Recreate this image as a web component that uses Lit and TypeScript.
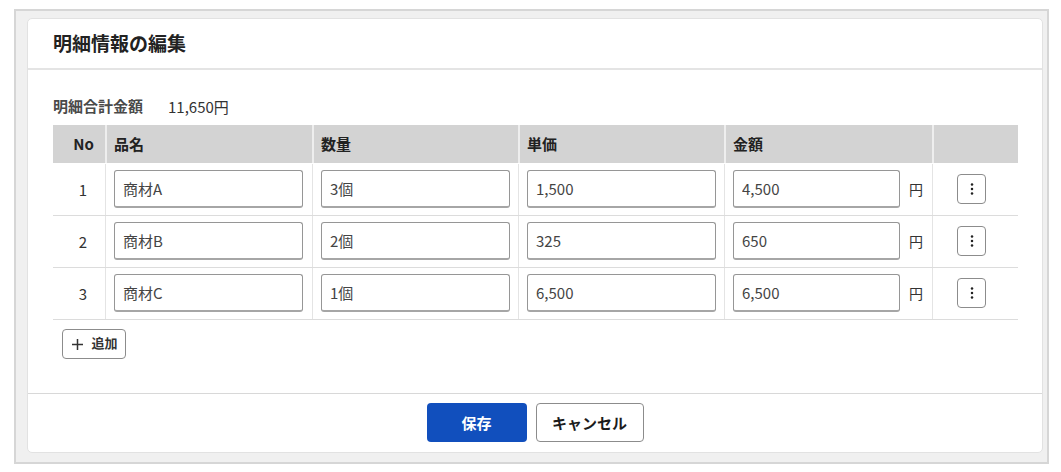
import { LitElement, html, css } from "lit";
import { customElement } from "lit/decorators.js";

const rows = [
  { no: 1, name: "商材A", qty: "3個", price: "1,500", amount: "4,500" },
  { no: 2, name: "商材B", qty: "2個", price: "325", amount: "650" },
  { no: 3, name: "商材C", qty: "1個", price: "6,500", amount: "6,500" },
];

@customElement("app-root")
export class AppRoot extends LitElement {
  static styles = css`
    :host {
      display: block;
      width: 1061px;
      height: 472px;
      box-sizing: border-box;
      padding: 9px 12px 8px 14px;
      background: #fff;
      font-family: "Noto Sans CJK JP", "Noto Sans", sans-serif;
      color: #333;
    }
    .frame {
      box-sizing: border-box;
      height: 455px;
      border: 2px solid #d6d6d6;
      background: #f0f0f0;
      padding: 7px 4px 9px 11px;
    }
    .card {
      box-sizing: border-box;
      height: 100%;
      background: #fff;
      border: 1px solid #e2e2e2;
      border-radius: 5px;
      display: flex;
      flex-direction: column;
    }
    .head {
      height: 51px;
      flex: none;
      box-sizing: border-box;
      border-bottom: 2px solid #e4e4e4;
      padding: 0 0 2px 25px;
      display: flex;
      align-items: center;
      font-size: 19px;
      font-weight: 700;
      color: #222;
    }
    .body {
      flex: 1;
      padding: 21px 24px 0 25px;
    }
    .summary {
      display: flex;
      align-items: center;
      height: 30px;
      margin-bottom: 4px;
      gap: 25px;
      font-size: 15px;
      color: #333;
    }
    .summary b {
      font-size: 15px;
      font-weight: 700;
      color: #4a4a4a;
      position: relative;
      top: -1px;
    }
    .row {
      display: grid;
      grid-template-columns: 52px 207px 206px 206px 208px 86px;
    }
    .thead {
      background: #d3d3d3;
      height: 38px;
      margin-bottom: 1px;
    }
    .thead > div {
      display: flex;
      align-items: center;
      padding: 0 0 2px 7px;
      border-left: 2px solid #eee;
      box-sizing: border-box;
      font-size: 15px;
      font-weight: 700;
      color: #222;
    }
    .thead > div.no {
      border-left: none;
      padding: 0 11px 2px 0;
      justify-content: flex-end;
    }
    .tbody {
      height: 52px;
      box-sizing: border-box;
      border-bottom: 1px solid #dcdcdc;
    }
    .tbody > div {
      display: flex;
      align-items: center;
      box-sizing: border-box;
      padding-left: 8px;
      padding-bottom: 1px;
      border-left: 1px solid #e4e4e4;
      font-size: 15px;
      height: 51px;
    }
    .tbody > div.no {
      border-left: none;
      padding: 0 18px 1px 0;
      justify-content: flex-end;
    }
    .input {
      box-sizing: border-box;
      width: 189px;
      height: 38px;
      border: 1px solid #969696;
      border-bottom: 2px solid #a6a6a6;
      border-radius: 3px;
      background: #fff;
      font: inherit;
      font-size: 15px;
      color: #444;
      padding: 0 8px;
      outline: none;
    }
    .amount .input {
      width: 167px;
      flex: none;
    }
    .yen {
      margin-left: 9px;
      font-size: 14px;
      color: #333;
    }
    .tbody > div.actions {
      padding-left: 24px;
    }
    .kebab {
      box-sizing: border-box;
      width: 29px;
      height: 30px;
      border: 1px solid #8c8c8c;
      border-radius: 4px;
      background: #fff;
      padding: 0;
      display: flex;
      align-items: center;
      justify-content: center;
    }
    .add {
      box-sizing: border-box;
      margin: 9px 0 0 9px;
      width: 64px;
      height: 30px;
      border: 1px solid #8c8c8c;
      border-radius: 4px;
      background: #fff;
      display: flex;
      align-items: center;
      justify-content: center;
      gap: 8px;
      padding: 0 0 0 2px;
      font: inherit;
      font-size: 13px;
      font-weight: 700;
      color: #333;
    }
    .add span {
      margin-bottom: 3px;
    }
    .foot {
      flex: none;
      height: 59px;
      box-sizing: border-box;
      border-top: 1px solid #d8d8d8;
      padding-top: 9px;
      display: flex;
      justify-content: center;
      align-items: flex-start;
      gap: 9px;
    }
    .btn {
      box-sizing: border-box;
      height: 39px;
      border-radius: 4px;
      font: inherit;
      font-size: 15px;
      font-weight: 700;
      padding: 0;
    }
    .save {
      width: 100px;
      background: #114fbd;
      border: none;
      color: #fff;
    }
    .cancel {
      width: 108px;
      background: #fff;
      border: 1px solid #8c8c8c;
      color: #1c1c1c;
    }
  `;

  render() {
    return html`
      <div class="frame">
        <div class="card">
          <div class="head">明細情報の編集</div>
          <div class="body">
            <div class="summary"><b>明細合計金額</b><span>11,650円</span></div>
            <div class="row thead">
              <div class="no">No</div>
              <div>品名</div>
              <div>数量</div>
              <div>単価</div>
              <div>金額</div>
              <div></div>
            </div>
            ${rows.map(
              (r) => html`
                <div class="row tbody">
                  <div class="no">${r.no}</div>
                  <div><input class="input" .value=${r.name} /></div>
                  <div><input class="input" .value=${r.qty} /></div>
                  <div><input class="input" .value=${r.price} /></div>
                  <div class="amount">
                    <input class="input" .value=${r.amount} /><span class="yen">円</span>
                  </div>
                  <div class="actions">
                    <button class="kebab" aria-label="メニュー">
                      <svg width="4" height="12" viewBox="0 0 4 12">
                        <circle cx="2" cy="1.6" r="1.25" fill="#222" />
                        <circle cx="2" cy="6" r="1.25" fill="#222" />
                        <circle cx="2" cy="10.4" r="1.25" fill="#222" />
                      </svg>
                    </button>
                  </div>
                </div>
              `
            )}
            <button class="add">
              <svg width="11" height="11" viewBox="0 0 11 11">
                <path d="M5.5 0v11M0 5.5h11" stroke="#333" stroke-width="1.5" fill="none" />
              </svg>
              <span>追加</span>
            </button>
          </div>
          <div class="foot">
            <button class="btn save">保存</button>
            <button class="btn cancel">キャンセル</button>
          </div>
        </div>
      </div>
    `;
  }
}
